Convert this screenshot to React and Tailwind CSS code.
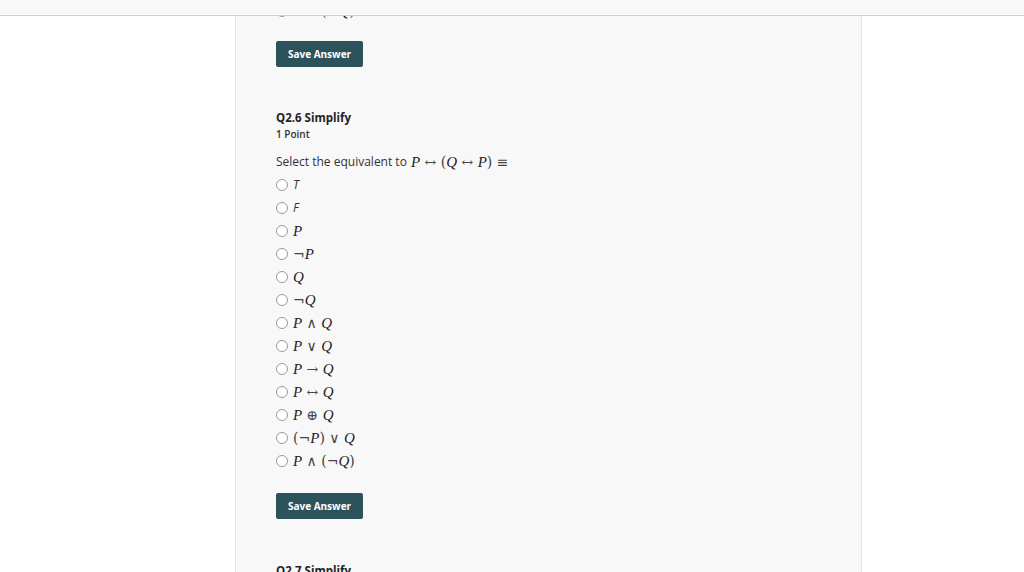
import React from 'react'

const sans = { fontFamily: '"Open Sans", "Noto Sans", sans-serif' }

const options = [
  { label: 'T', plain: true },
  { label: 'F', plain: true },
  { label: 'P' },
  { label: '¬P' },
  { label: 'Q' },
  { label: '¬Q' },
  { label: 'P ∧ Q' },
  { label: 'P ∨ Q' },
  { label: 'P → Q' },
  { label: 'P ↔ Q' },
  { label: 'P ⊕ Q' },
  { label: '(¬P) ∨ Q' },
  { label: 'P ∧ (¬Q)' },
]

function Math({ children }) {
  // italic letters, upright operators, like KaTeX
  const parts = children.split(/([PQ])/)
  return (
    <span className="whitespace-pre font-['Liberation_Serif','DejaVu_Serif',serif] text-[15px] leading-[18px] text-[#222]">
      {parts.map((p, i) =>
        p === 'P' || p === 'Q' ? (
          <i key={i}>{p}</i>
        ) : (
          <span key={i} className="font-['DejaVu_Serif',serif] text-[14px] text-[#444]">{p}</span>
        )
      )}
    </span>
  )
}

function Option({ label, plain }) {
  return (
    <label className="flex h-[23px] items-center gap-[5px]">
      <span className="h-[12px] w-[12px] rounded-full border border-[#9a9a9a] bg-white" />
      {plain ? (
        <span className="text-[12px] italic text-[#333]" style={sans}>{label}</span>
      ) : (
        <Math>{label}</Math>
      )}
    </label>
  )
}

function SaveButton({ className }) {
  return (
    <button
      className={`h-[26px] w-[87px] rounded-[2px] bg-[#2c525b] text-[10px] font-bold text-white ${className}`}
      style={sans}
    >
      Save Answer
    </button>
  )
}

export default function App() {
  return (
    <div className="h-[572px] w-[1024px] overflow-hidden bg-white" style={sans}>
      {/* top bar */}
      <div className="h-[16px] border-b border-[#cfcfcf] bg-[#f8f8f8]" />

      <div className="ml-[235px] h-[556px] w-[627px] overflow-hidden border-x border-[#e6e6e6] bg-[#f8f8f8] pl-[40px]">
        {/* tail of previous question */}
        <div className="-mt-[17px]">
          <Option label="P ∧ (¬Q)" />
        </div>

        <SaveButton className="mt-[19px] block" />

        {/* Q2.6 */}
        <h3 className="mt-[43px] text-[11.5px] font-bold leading-[16px] text-[#222]">Q2.6 Simplify</h3>
        <p className="mt-[1px] text-[10px] font-semibold leading-[14px] text-[#333]">1 Point</p>

        <p className="mt-[12px] flex h-[18px] items-center gap-[4px] text-[12px] text-[#333]">
          Select the equivalent to <Math>{'P ↔ (Q ↔ P) ≡'}</Math>
        </p>

        <div className="mt-[2px] flex flex-col">
          {options.map((o) => (
            <Option key={o.label} {...o} />
          ))}
        </div>

        <SaveButton className="mt-[21px] block" />

        <h3 className="mt-[44px] text-[11.5px] font-bold leading-[16px] text-[#222]">Q2.7 Simplify</h3>
      </div>
    </div>
  )
}
